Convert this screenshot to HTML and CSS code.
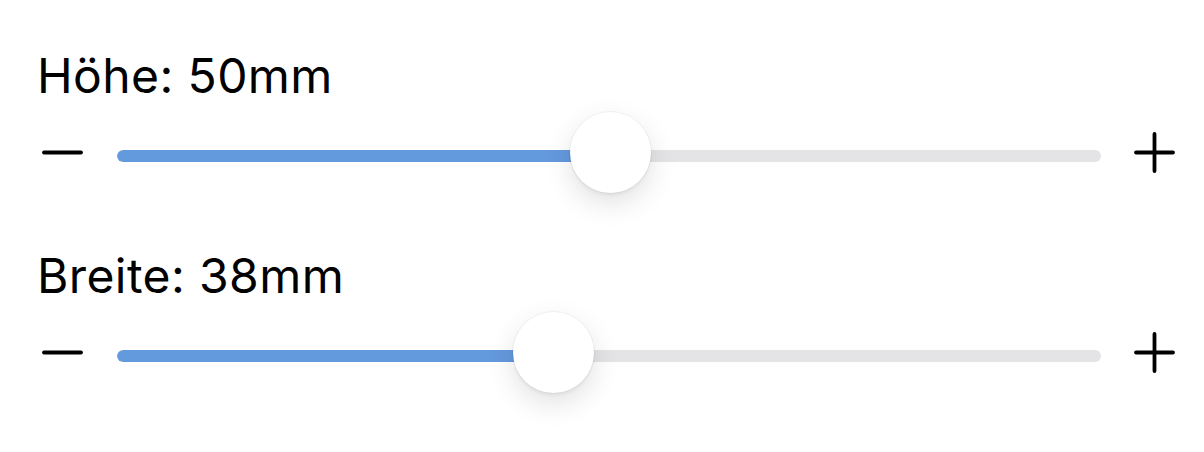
FILE: index.html
```html
<!DOCTYPE html>
<html lang="de">
<head>
<meta charset="utf-8">
<title>Slider</title>
<link rel="stylesheet" href="styles.css">
</head>
<body>
<main class="panel">
  <section class="group">
    <div class="label">Höhe: 50mm</div>
    <div class="row">
      <svg class="icon" viewBox="0 0 41 41" aria-hidden="true"><path d="M2 20.5H39"/></svg>
      <div class="track">
        <div class="rail"><div class="fill" style="width:493px"></div></div>
        <div class="thumb" style="left:453px"></div>
      </div>
      <svg class="icon" viewBox="0 0 41 41" aria-hidden="true"><path d="M2 20.5H39M20.5 2V39"/></svg>
    </div>
  </section>
  <section class="group">
    <div class="label">Breite: 38mm</div>
    <div class="row">
      <svg class="icon" viewBox="0 0 41 41" aria-hidden="true"><path d="M2 20.5H39"/></svg>
      <div class="track">
        <div class="rail"><div class="fill" style="width:436px"></div></div>
        <div class="thumb" style="left:396px"></div>
      </div>
      <svg class="icon" viewBox="0 0 41 41" aria-hidden="true"><path d="M2 20.5H39M20.5 2V39"/></svg>
    </div>
  </section>
</main>
</body>
</html>
```
FILE: styles.css
```css
html, body {
  margin: 0;
  padding: 0;
  background: #ffffff;
}
.panel {
  width: 1204px;
  height: 452px;
  box-sizing: border-box;
  padding: 51px 29px 0 42px;
  display: flex;
  flex-direction: column;
  gap: 58px;
  font-family: Inter, "Liberation Sans", Arial, sans-serif;
  color: #000;
}
.group {
  display: flex;
  flex-direction: column;
  gap: 12px;
}
.label {
  font-size: 48px;
  line-height: 49px;
  letter-spacing: 0.4px;
  margin-left: -5px;
  white-space: nowrap;
}
.row {
  display: flex;
  align-items: center;
  height: 81px;
}
.icon {
  width: 41px;
  height: 41px;
  flex: none;
  fill: none;
  stroke: #000;
  stroke-width: 3.8;
  stroke-linecap: round;
}
.track {
  position: relative;
  flex: 1;
  height: 81px;
  margin: 0 33px 0 34px;
  display: flex;
  align-items: center;
}
.rail {
  width: 100%;
  height: 12px;
  margin-top: 6px;
  border-radius: 6px;
  background: #e4e4e6;
  overflow: hidden;
}
.fill {
  height: 100%;
  background: #6399dd;
  border-radius: 6px 0 0 6px;
}
.thumb {
  position: absolute;
  top: 0;
  width: 81px;
  height: 81px;
  border-radius: 50%;
  background: #fff;
  box-shadow: 0 0 0 1px rgba(0, 0, 0, 0.04), 0 10px 28px rgba(0, 0, 0, 0.12), 0 3px 3px rgba(0, 0, 0, 0.04);
}
```
